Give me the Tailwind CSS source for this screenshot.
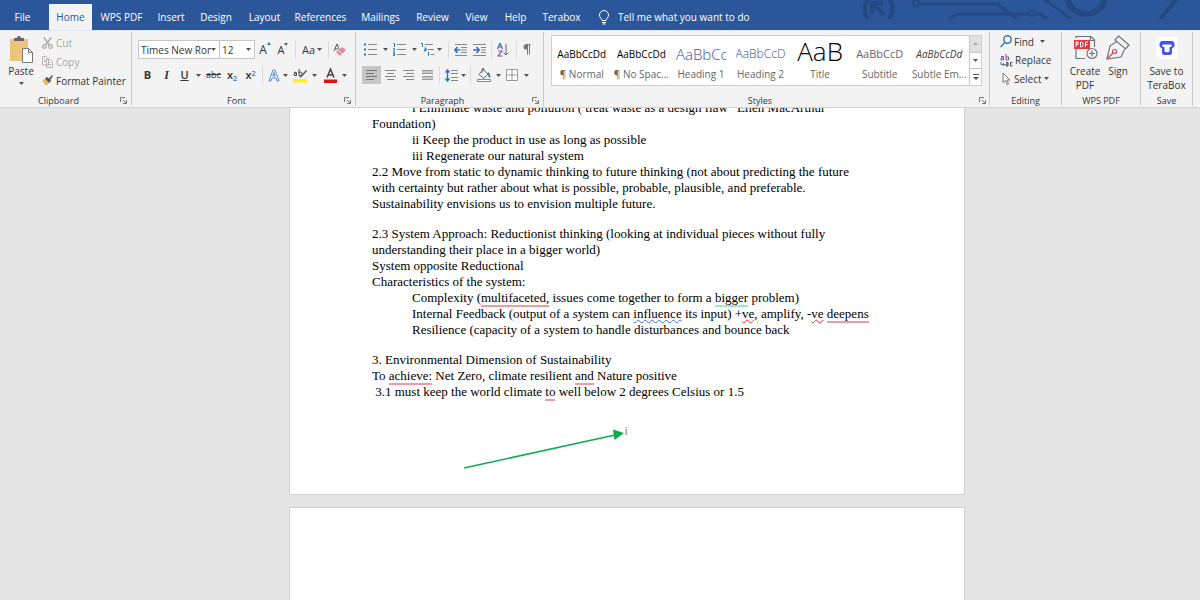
<!DOCTYPE html>
<html lang="en">
<head>
<meta charset="utf-8">
<title>Document - Word</title>
<script src="https://cdn.jsdelivr.net/npm/@tailwindcss/browser@4"></script>
</head>
<body class="flex h-screen flex-col overflow-hidden bg-[#e5e5e5] font-['Open_Sans','Noto_Sans',sans-serif] text-[10px] leading-[14px] text-[#333]">
<svg class="hidden">
  <defs>
    <symbol id="caret" viewBox="0 0 5 3"><path d="M0 0h5L2.5 3z" fill="#555"/></symbol>
    <symbol id="launch" viewBox="0 0 7 7"><path d="M.5 5V.5H5M3 3l3 3M6.500 3v3.500H3" fill="none" stroke="#777"/></symbol>
  </defs>
</svg>

<header class="relative flex h-[30px] shrink-0 bg-[#2b579a] text-white">
  <svg class="absolute top-0 right-0 h-[19px] w-[345px]" viewBox="0 0 345 19" fill="none" stroke="#234882" stroke-width="3">
    <path d="M13 -1q-7 10 0 20M34 -1q7 10 0 20" stroke-width="4"/><path d="M17 14V3h11M18 4l11 11" stroke-width="4"/>
    <circle cx="61" cy="3" r="3" stroke-width="2"/><path d="M65 4h77l22 16M93 20l9-6h71M181 14h4l9 6"/><circle cx="177" cy="13" r="3" stroke-width="2"/>
    <path d="M189 -1l27 20"/><circle cx="231" cy="-5" r="19" stroke-width="6"/><path d="M322 -1l-17 20" stroke-width="4"/>
  </svg>
  <nav class="relative flex pt-1">
    <button class="mr-1 w-[45px]">File</button>
    <button class="w-[43px] bg-[#f3f3f3] text-[#2b579a]">Home</button>
    <button class="w-[59px]">WPS PDF</button>
    <button class="w-10">Insert</button>
    <button class="w-[50px]">Design</button>
    <button class="w-[47px]">Layout</button>
    <button class="w-[65px]">References</button>
    <button class="w-[55px]">Mailings</button>
    <button class="w-[49px]">Review</button>
    <button class="w-[39px]">View</button>
    <button class="w-[39px]">Help</button>
    <button class="w-[53px]">Terabox</button>
    <button class="flex items-center gap-2 pl-[10px] whitespace-nowrap">
      <svg class="h-[15px] w-[12px]" viewBox="0 0 12 15" fill="none" stroke="#fff"><path d="M4 10.500C4 8.500 1.500 8 1.500 5a4.500 4.500 0 0 1 9 0c0 3-2.500 3.500-2.500 5.500zM4 12.500h4M4.500 14h3"/></svg>
      Tell me what you want to do</button>
  </nav>
</header>

<div class="flex h-[78px] shrink-0 border-t border-b border-t-[#dce6f5] border-b-[#d2d2d2] bg-[#f3f3f3] py-px">
  <!-- Clipboard -->
  <section class="flex w-[132px] shrink-0 flex-col border-r border-[#c9c9c9]">
    <div class="flex flex-1">
      <button class="flex w-[42px] flex-col items-center pt-1">
        <svg class="h-[27px] w-[24px]" viewBox="0 0 24 27"><path d="M1 3h18v22H1z" fill="#ecc57c"/><path d="M5 5V2h3a2 2 0 0 1 4 0h3v3z" fill="#666"/><path d="M13.500 12.500h6l4 4v10h-10z" fill="#fff" stroke="#777"/><path d="M19.500 12.500v4h4" fill="none" stroke="#777"/></svg>
        <span class="mt-px">Paste</span>
        <svg class="mt-1 h-[3px] w-[5px]"><use href="#caret"/></svg>
      </button>
      <div class="flex flex-1 flex-col pt-[1px]">
        <button class="flex h-[19px] items-center gap-[3px] text-[#a6a6a6]"><svg class="h-[12px] w-[11px]" viewBox="0 0 11 12" fill="none" stroke="#aaa" stroke-width="1.300"><path d="M1.500 0l6 8M9.500 0l-6 8"/><circle cx="2.500" cy="9.500" r="1.800"/><circle cx="8.500" cy="9.500" r="1.800"/></svg>Cut</button>
        <button class="flex h-[19px] items-center gap-[3px] text-[#a6a6a6]"><svg class="h-[12px] w-[11px]" viewBox="0 0 11 12" fill="#f3f3f3" stroke="#b9b0b5"><path d="M.5.5H4L6.500 3v6h-6zM4.500 3.500H8L10.500 6v5.500h-6zM6 6.500h2M6 8.500h3M2 3.500h1.500M2 5.500h2"/></svg>Copy</button>
        <button class="flex h-[19px] items-center gap-[3px] whitespace-nowrap"><svg class="h-[11px] w-[11px]" viewBox="0 0 11 11"><path d="M0 5l4-1 3 4-3 3z" fill="#ecb863"/><path d="M3 3.500L5 2l2 1.500L10 0l1 1-2.500 3.500L9 6 7 8z" fill="#555"/></svg>Format Painter</button>
      </div>
    </div>
    <div class="flex h-[11px] items-center pr-1"><span class="flex-1 pr-[3px] text-center text-[9px]">Clipboard</span><button aria-label="Clipboard options"><svg class="h-[7px] w-[7px]"><use href="#launch"/></svg></button></div>
  </section>

  <!-- Font -->
  <section class="flex w-[224px] shrink-0 flex-col border-r border-[#c9c9c9]">
    <div class="flex flex-1 flex-col gap-[7px] pt-2 pl-[6px]">
      <div class="flex h-[19px] items-center">
        <label class="relative flex h-[19px] w-[82px] items-center border border-[#c6c6c6] bg-white"><select aria-label="Font" class="w-[72px] appearance-none overflow-hidden pl-[2px] text-[10px] text-clip"><option>Times New Roman</option></select><svg class="absolute right-[3px] h-[3px] w-[5px]"><use href="#caret"/></svg></label>
        <label class="relative flex h-[19px] w-[35px] items-center border border-l-0 border-[#c6c6c6] bg-white"><select aria-label="Font size" class="w-[28px] appearance-none pl-[2px] text-[10px]"><option>12</option></select><svg class="absolute right-[3px] h-[3px] w-[5px]"><use href="#caret"/></svg></label>
        <button class="flex w-5 justify-center text-xs" aria-label="Grow font">A<svg class="h-[3px] w-[4px]" viewBox="0 0 4 3"><path d="M0 3l2-3 2 3z" fill="#2f74b5"/></svg></button>
        <button class="flex w-4 justify-center text-[11px]" aria-label="Shrink font">A<svg class="h-[3px] w-[4px]" viewBox="0 0 4 3"><path d="M0 0l2 3 2-3z" fill="#2f74b5"/></svg></button>
        <i class="mx-1 h-[18px] w-px bg-[#d9d9d9]"></i>
        <button class="flex w-[24px] items-center justify-center gap-[2px] text-[11px]">Aa<svg class="h-[3px] w-[5px]"><use href="#caret"/></svg></button>
        <i class="mx-1 h-[18px] w-px bg-[#d9d9d9]"></i>
        <button aria-label="Clear formatting"><svg class="h-[13px] w-[13px]" viewBox="0 0 13 13"><path d="M1 8L4 1l2 5M2 6h3" fill="none" stroke="#555"/><path d="M3 9l6-5 4 3-6 6z" fill="#e58898"/><path d="M5.500 7.500L9 11" stroke="#fff"/></svg></button>
      </div>
      <div class="flex h-[18px] items-center">
        <button class="w-[19px] text-[11px] font-bold">B</button>
        <button class="w-[19px] font-['Liberation_Serif',serif] text-xs font-bold italic">I</button>
        <button class="w-[17px] text-[11px] font-semibold underline">U</button>
        <button class="flex w-[11px] justify-center" aria-label="Underline style"><svg class="h-[3px] w-[5px]"><use href="#caret"/></svg></button>
        <button class="w-[19px] text-[9px] line-through">abc</button>
        <button class="w-[18px] text-[11px] font-semibold">x<sub class="text-[7px] text-[#2f74b5]">2</sub></button>
        <button class="w-[19px] text-[11px] font-semibold">x<sup class="text-[7px] text-[#2f74b5]">2</sup></button>
        <i class="mr-1 ml-[2px] h-[18px] w-px bg-[#d9d9d9]"></i>
        <button class="flex w-[22px] items-center justify-center gap-[3px]" aria-label="Text effects"><svg class="h-[13px] w-[12px]" viewBox="0 0 12 13"><path d="M1 12L5 1h2l4 11H9L8 9H4l-1 3zM4.800 7h2.400L6 3.500z" fill="#fff" stroke="#4a8bd0"/></svg><svg class="h-[3px] w-[5px]"><use href="#caret"/></svg></button>
        <button class="flex w-[32px] items-center justify-center gap-[5px]" aria-label="Highlight colour"><svg class="h-[15px] w-[14px]" viewBox="0 0 14 15"><path d="M1 4.500q2.500-1 2.500.5v2.500H2Q.5 7.500 1 6q1-.8 2.500-.5M6 1v6.500h2Q9.500 7 9 5T6 4.500" fill="none" stroke="#444"/><path d="M13 2L7.500 8 6 10l2.500-1L14 3z" fill="#555"/><path d="M0 11h14v3.500H0z" fill="#ffee20"/></svg><svg class="h-[3px] w-[5px]"><use href="#caret"/></svg></button>
        <button class="flex w-[28px] items-center justify-center gap-[5px]" aria-label="Font colour"><svg class="h-[15px] w-[13px]" viewBox="0 0 13 15"><path d="M3 9.500L6.500 1 10 9.500M4.200 7h4.600" fill="none" stroke="#444" stroke-width="1.500"/><path d="M0 11.500h13V15H0z" fill="#e01010"/></svg><svg class="h-[3px] w-[5px]"><use href="#caret"/></svg></button>
      </div>
    </div>
    <div class="flex h-[11px] items-center pr-1"><span class="flex-1 pr-[3px] text-center text-[9px]">Font</span><button aria-label="Font options"><svg class="h-[7px] w-[7px]"><use href="#launch"/></svg></button></div>
  </section>

  <!-- Paragraph -->
  <section class="flex w-[188px] shrink-0 flex-col border-r border-[#c9c9c9]">
    <div class="flex flex-1 flex-col gap-[7px] pt-2 pl-[6px]">
      <div class="flex h-[19px] items-center">
        <button class="flex w-[28px] items-center justify-center gap-[6px]" aria-label="Bullets"><svg class="h-[13px] w-[13px]" viewBox="0 0 13 13"><path d="M0 1.500h2M0 6.500h2M0 11.500h2" stroke="#2f74b5" stroke-width="2"/><path d="M4 1.500h9M4 6.500h9M4 11.500h9" stroke="#888"/></svg><svg class="h-[3px] w-[5px]"><use href="#caret"/></svg></button>
        <button class="flex w-[29px] items-center justify-center gap-[6px]" aria-label="Numbering"><svg class="h-[13px] w-[13px]" viewBox="0 0 13 13"><path d="M.5.500h1V4M0 5.500h1.500v1L.5 8H2M0 9.500h1.500V11H.5h1v1.500H0" fill="none" stroke="#2f74b5"/><path d="M4 1.500h9M4 6.500h9M4 11.500h9" stroke="#888"/></svg><svg class="h-[3px] w-[5px]"><use href="#caret"/></svg></button>
        <button class="flex w-[25px] items-center justify-center gap-[2px]" aria-label="Multilevel list"><svg class="h-[13px] w-[14px]" viewBox="0 0 14 13"><path d="M0 .5h1.500V4M3.500 5H5v3H3.500V6.500H5M7.500 9v4" fill="none" stroke="#2f74b5"/><path d="M4 1.500h8M7 6.500h6M9.500 11.500h4" stroke="#888"/></svg><svg class="h-[3px] w-[5px]"><use href="#caret"/></svg></button>
        <i class="mr-[5px] ml-1 h-[18px] w-px bg-[#d9d9d9]"></i>
        <button class="flex w-[19px] items-center" aria-label="Decrease indent"><svg class="h-[12px] w-[13px]" viewBox="0 0 13 12"><path d="M1 .5h12M7 3.500h6M7 6h6M7 8.500h6M1 11.500h12" stroke="#888"/><path d="M6 6H1M3.500 3L.8 6l2.700 3" fill="none" stroke="#2f74b5" stroke-width="1.600"/></svg></button>
        <button class="flex w-[16px] items-center" aria-label="Increase indent"><svg class="h-[12px] w-[13px]" viewBox="0 0 13 12"><path d="M0 .5h13M8 3.500h5M8 6h5M8 8.500h5M0 11.500h13" stroke="#888"/><path d="M0 6h6M3.500 3l2.700 3-2.700 3" fill="none" stroke="#2f74b5" stroke-width="1.600"/></svg></button>
        <i class="mr-[5px] ml-[2px] h-[18px] w-px bg-[#d9d9d9]"></i>
        <button class="flex w-[15px] items-center" aria-label="Sort"><svg class="h-[14px] w-[12px]" viewBox="0 0 12 14" fill="none"><path d="M.5 6L3 0l2.500 6M1.500 4h3" stroke="#2f74b5" stroke-width="1.200"/><path d="M1 8h4l-4 5h4.500" stroke="#8a4fa8" stroke-width="1.200"/><path d="M9 1v11M6.500 9.500L9 12l2.500-2.500" stroke="#666"/></svg></button>
        <i class="mr-[5px] ml-1 h-[18px] w-px bg-[#d9d9d9]"></i>
        <button aria-label="Show marks"><svg class="h-[11px] w-[9px]" viewBox="0 0 9 11"><path d="M3.500 .5H8.500M5.500 .5V10.500M7.500 .5V10.500" fill="none" stroke="#777"/><path d="M5 .5H4a2.500 2.500 0 0 0 0 5H5z" fill="#777"/></svg></button>
      </div>
      <div class="flex h-[18px] items-center">
        <button class="flex h-[18px] w-[19px] items-center justify-center bg-[#c6c6c6]" aria-label="Align left"><svg class="h-[10px] w-[11px]" viewBox="0 0 11 10"><path d="M0 .5h11M0 3.500h8M0 6.500h11M0 9.500h8" stroke="#777"/></svg></button>
        <button class="flex w-[18px] justify-center" aria-label="Centre"><svg class="h-[10px] w-[11px]" viewBox="0 0 11 10"><path d="M0 .5h11M2 3.500h7M0 6.500h11M2 9.500h7" stroke="#888"/></svg></button>
        <button class="flex w-[19px] justify-center" aria-label="Align right"><svg class="h-[10px] w-[11px]" viewBox="0 0 11 10"><path d="M0 .5h11M3 3.500h8M0 6.500h11M3 9.500h8" stroke="#888"/></svg></button>
        <button class="flex w-[18px] justify-center" aria-label="Justify"><svg class="h-[10px] w-[11px]" viewBox="0 0 11 10"><path d="M0 .5h11M0 3.500h11M0 6.500h11M0 9.500h11M0 2h11M0 8h11" stroke="#999"/></svg></button>
        <i class="mr-[5px] ml-[3px] h-[18px] w-px bg-[#d9d9d9]"></i>
        <button class="flex w-[22px] items-center gap-[3px]" aria-label="Line spacing"><svg class="h-[13px] w-[13px]" viewBox="0 0 13 13" fill="none"><path d="M2.500 1v11M.5 3.500l2-2.500 2 2.500M.5 9.500l2 2.500 2-2.500" stroke="#2f74b5" stroke-width="1.400"/><path d="M6 1.500h7M6 4.500h7M6 8.500h7M6 11.500h7" stroke="#888"/></svg><svg class="h-[3px] w-[5px]"><use href="#caret"/></svg></button>
        <i class="mr-[6px] ml-[3px] h-[18px] w-px bg-[#d9d9d9]"></i>
        <button class="flex w-[29px] items-center gap-[5px]" aria-label="Shading"><svg class="h-[14px] w-[14px]" viewBox="0 0 14 14"><path d="M6 1.500l5 4.500-4 4.500-5-4zM5 5V1q1-1.500 2 0v2" fill="#fff" stroke="#666"/><path d="M11 4q3 2 2 6-2-1-2-4z" fill="#2f74b5"/><path d="M.5 11.500h13v2H.5z" fill="#fff" stroke="#888"/></svg><svg class="h-[3px] w-[5px]"><use href="#caret"/></svg></button>
        <button class="flex items-center gap-[6px]" aria-label="Borders"><svg class="h-[12px] w-[12px]" viewBox="0 0 12 12"><path d="M.5.500h11v11H.5zM6 .5v11M.5 6h11" fill="#fff" stroke="#999"/></svg><svg class="h-[3px] w-[5px]"><use href="#caret"/></svg></button>
      </div>
    </div>
    <div class="flex h-[11px] items-center pr-1"><span class="flex-1 pr-[3px] text-center text-[9px]">Paragraph</span><button aria-label="Paragraph options"><svg class="h-[7px] w-[7px]"><use href="#launch"/></svg></button></div>
  </section>

  <!-- Styles -->
  <section class="flex min-w-0 flex-1 flex-col border-r border-[#c9c9c9]">
    <div class="flex flex-1 pt-[3px] pr-[7px] pl-[7px]">
      <div class="flex h-[51px] min-w-0 flex-1 border border-[#cfcfcf] bg-white text-[#666]">
        <button class="flex min-w-0 flex-1 flex-col items-center"><span class="flex h-[31px] w-[50px] items-center justify-center pt-1 text-black">AaBbCcDd</span><span class="whitespace-nowrap">¶ Normal</span></button>
        <button class="flex min-w-0 flex-1 flex-col items-center"><span class="flex h-[31px] w-[50px] items-center justify-center pt-1 text-black">AaBbCcDd</span><span class="whitespace-nowrap">¶ No Spac...</span></button>
        <button class="flex min-w-0 flex-1 flex-col items-center"><span class="flex h-[31px] w-[50px] items-center overflow-hidden pt-1 text-[15px] font-light text-[#2f5496]">AaBbCc</span><span class="whitespace-nowrap">Heading 1</span></button>
        <button class="flex min-w-0 flex-1 flex-col items-center"><span class="flex h-[31px] w-[50px] items-center overflow-hidden pt-1 text-[12px] font-light text-[#2f5496]">AaBbCcD</span><span class="whitespace-nowrap">Heading 2</span></button>
        <button class="flex min-w-0 flex-1 flex-col items-center"><span class="flex h-[31px] items-center pb-[2px] text-[26px] font-light text-black">AaB</span><span class="whitespace-nowrap">Title</span></button>
        <button class="flex min-w-0 flex-1 flex-col items-center"><span class="flex h-[31px] items-center pt-1 text-[11px]">AaBbCcD</span><span class="whitespace-nowrap">Subtitle</span></button>
        <button class="flex min-w-0 flex-1 flex-col items-center"><span class="flex h-[31px] w-[50px] items-center justify-center pt-1 text-[#404040] italic">AaBbCcDd</span><span class="whitespace-nowrap">Subtle Em...</span></button>
        <div class="flex w-[12px] flex-col divide-y divide-[#c6c6c6] border-l border-[#c6c6c6]">
          <button class="flex flex-1 items-center justify-center bg-[#e1e1e1]" aria-label="Scroll up"><svg class="h-[3px] w-[5px]" viewBox="0 0 5 3"><path d="M0 3h5L2.500 0z" fill="#aaa"/></svg></button>
          <button class="flex flex-1 items-center justify-center" aria-label="Scroll down"><svg class="h-[3px] w-[5px]"><use href="#caret"/></svg></button>
          <button class="flex flex-1 items-center justify-center" aria-label="More styles"><svg class="h-[6px] w-[6px]" viewBox="0 0 6 6"><path d="M0 .5h6" stroke="#555"/><path d="M0 3h6L3 6z" fill="#555"/></svg></button>
        </div>
      </div>
    </div>
    <div class="flex h-[11px] items-center pr-[3px]"><span class="flex-1 pr-[3px] text-center text-[9px]">Styles</span><button aria-label="Style options"><svg class="h-[7px] w-[7px]"><use href="#launch"/></svg></button></div>
  </section>

  <!-- Editing -->
  <section class="flex w-[72px] shrink-0 flex-col border-r border-[#c9c9c9]">
    <div class="flex flex-1 flex-col pl-[10px]">
      <button class="flex h-[19px] items-center gap-[2px]"><svg class="h-[13px] w-[12px]" viewBox="0 0 12 13" fill="none" stroke="#3b78b5" stroke-width="1.500"><circle cx="7.500" cy="4.500" r="3.700"/><path d="M5 7.500L.5 12"/></svg>Find<svg class="ml-1 h-[3px] w-[5px]"><use href="#caret"/></svg></button>
      <button class="flex h-[18px] items-center gap-[2px]"><svg class="h-[13px] w-[13px]" viewBox="0 0 13 13" fill="none"><path d="M1 2.500h2.500V6H1V4h2.500M6 0v6h2.500V3H6" stroke="#7e4d9e"/><path d="M1 8v2.500h3M3 9l1.500 1.500L3 12" stroke="#2f74b5"/><path d="M6 8.500h2V12H6v-2h2M12.500 8.500h-2V12h2" stroke="#444"/></svg>Replace</button>
      <button class="flex h-[19px] items-center gap-[2px]"><svg class="h-[13px] w-[12px]" viewBox="0 0 12 13"><path d="M3 1v9.500l2.500-2 1.500 4 1.500-.7L7 8h3z" fill="#fff" stroke="#777"/></svg>Select<svg class="h-[3px] w-[5px]"><use href="#caret"/></svg></button>
    </div>
    <div class="h-[11px] text-center text-[9px] leading-[11px]">Editing</div>
  </section>

  <!-- WPS PDF -->
  <section class="flex w-[79px] shrink-0 flex-col border-r border-[#c9c9c9]">
    <div class="flex flex-1 pt-[3px] pl-1">
      <button class="flex w-[38px] flex-col items-center"><svg class="mb-[3px] h-[26px] w-[25px]" viewBox="0 0 25 26" fill="none"><path d="M3 14v9.500h9M3 3V1.500h15L21.500 5v7M17.500 2v3.500H21" stroke="#6c7480" stroke-width="1.200"/><path d="M1 5h16v9H1z" fill="#e5393c"/><path d="M3 12V7h2v2.500H3M7.500 7.200v4.600h1q1.700-.2 1.700-2.300T8.500 7.200zM12.500 12V7H15M12.500 9.500h2" stroke="#fff"/><circle cx="19" cy="18.500" r="5" fill="#f3f3f3" stroke="#6c7480" stroke-width="1.200"/><path d="M16 18.500h6M19 15.500v6" stroke="#6c7480" stroke-width="1.200"/></svg><span>Create<br>PDF</span></button>
      <button class="flex w-[28px] flex-col items-center"><svg class="mb-[3px] h-[26px] w-[25px]" viewBox="0 0 25 26" fill="none" stroke="#6c7480" stroke-width="1.200"><path d="M12.500 1l10.500 9-3.500 4L9 5zM10.500 6.500L4 11 1 24l14-2 3.500-7.500"/><path d="M1 24l6-6" stroke="#d64545"/><circle cx="8.500" cy="16.500" r="2" stroke="#d64545"/></svg>Sign</button>
    </div>
    <div class="h-[11px] text-center text-[9px] leading-[11px]">WPS PDF</div>
  </section>

  <!-- Save -->
  <section class="flex w-[52px] shrink-0 flex-col border-r border-[#c9c9c9]">
    <button class="flex flex-1 flex-col items-center justify-start pt-[5px]"><svg class="mb-[5px] h-[22px] w-[22px]" viewBox="0 0 22 22"><path d="M0 0h22v22H0z" fill="#fff"/><path d="M6 4h10q2 0 2.500 2.500v3l-2.500 2v4q0 2.500-2.500 2.500h-5Q6 18 6 15.500v-4l-2.500-2v-3Q4 4 6 4z" fill="#4353ee"/><path d="M6.500 7.500h9v2.500h-2v4.500q-2.500 1.500-5 0V10h-2z" fill="#fff"/></svg><span class="whitespace-nowrap">Save to<br>TeraBox</span></button>
    <div class="h-[11px] text-center text-[9px] leading-[11px]">Save</div>
  </section>
  <div class="w-[7px] shrink-0"></div>
</div>

<main class="flex min-h-0 flex-1 flex-col items-center overflow-hidden pl-[54px]">
  <article class="w-[676px] shrink-0 border border-t-0 border-[#cfcfcf] bg-white pb-[24px] pl-[82px] font-['Liberation_Serif',serif] text-[13px] leading-4 text-black">
    <p class="-mt-2 pl-10">i Eliminate waste and pollution ( treat waste as a design flaw” Ellen MacArthur</p>
    <p>Foundation)</p>
    <p class="pl-10">ii Keep the product in use as long as possible</p>
    <p class="pl-10">iii Regenerate our natural system</p>
    <p>2.2 Move from static to dynamic thinking to future thinking (not about predicting the future<br>with certainty but rather about what is possible, probable, plausible, and preferable.<br>Sustainability envisions us to envision multiple future.</p>
    <p class="mt-[14px]">2.3 System Approach: Reductionist thinking (looking at individual pieces without fully<br>understanding their place in a bigger world)</p>
    <p>System opposite Reductional</p>
    <p>Characteristics of the system:</p>
    <p class="pl-10">Complexity (<span class="border-b-2 border-[#ee9ba6]">multifaceted,</span> issues come together to form a <span class="border-b-2 border-[#a5e5cf]">bigger</span> problem)</p>
    <p class="pl-10">Internal Feedback (output of a system can <span class="underline decoration-[#3f6fd0] decoration-wavy decoration-1">influence</span> its input) +<span class="underline decoration-[#e03030] decoration-wavy decoration-1">ve,</span> amplify, -<span class="underline decoration-[#e03030] decoration-wavy decoration-1">ve</span> <span class="border-b-2 border-[#ee9ba6]">deepens</span></p>
    <p class="pl-10">Resilience (capacity of a system to handle disturbances and bounce back</p>
    <p class="mt-[14px]">3. Environmental Dimension of Sustainability</p>
    <p>To <span class="border-b-2 border-[#ee9ba6]">achieve:</span> Net Zero, climate resilient <span class="border-b-2 border-[#ee9ba6]">and</span> Nature positive</p>
    <p class="whitespace-pre-wrap"> 3.1 must keep the world climate <span class="border-b-2 border-[#ee9ba6]">to</span> well below 2 degrees Celsius or 1.5</p>
    <div class="mt-6 flex pl-[91px]">
      <svg class="h-[46px] w-[162px]" viewBox="0 0 162 46"><path d="M1 44L152 11" stroke="#12ab50" stroke-width="1.500"/><path d="M150 5.500L161 9l-9.500 7z" fill="#0cab4b"/></svg>
      <span class="font-['Liberation_Sans',sans-serif] text-[10px] text-[#666]">i</span>
    </div>
  </article>
  <article class="mt-3 h-[200px] w-[676px] shrink-0 border border-[#cfcfcf] bg-white" aria-label="Page 2"></article>
</main>
</body>
</html>
